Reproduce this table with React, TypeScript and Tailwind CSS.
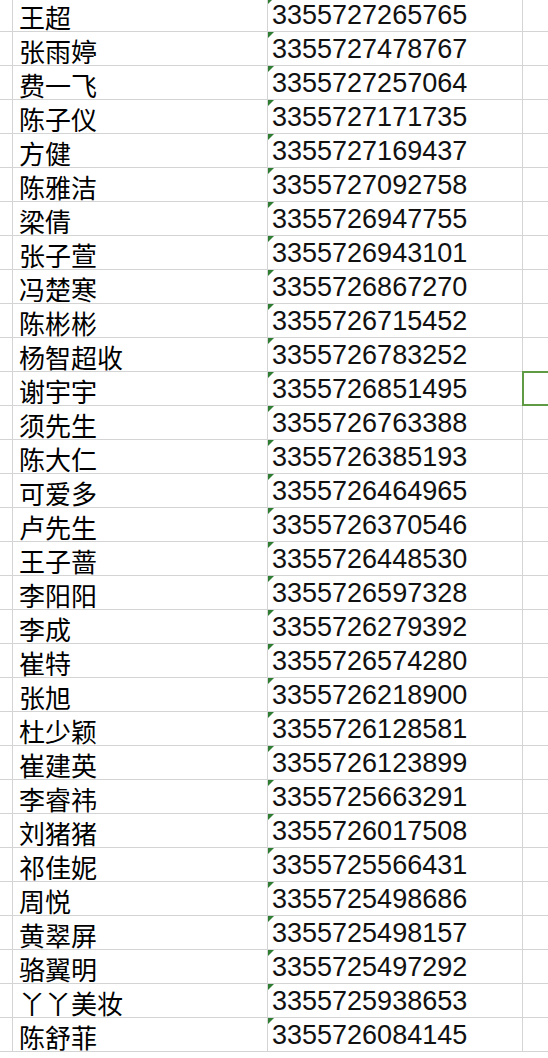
const ROWS: [string, string][] = [
  ["王超", "3355727265765"],
  ["张雨婷", "3355727478767"],
  ["费一飞", "3355727257064"],
  ["陈子仪", "3355727171735"],
  ["方健", "3355727169437"],
  ["陈雅洁", "3355727092758"],
  ["梁倩", "3355726947755"],
  ["张子萱", "3355726943101"],
  ["冯楚寒", "3355726867270"],
  ["陈彬彬", "3355726715452"],
  ["杨智超收", "3355726783252"],
  ["谢宇宇", "3355726851495"],
  ["须先生", "3355726763388"],
  ["陈大仁", "3355726385193"],
  ["可爱多", "3355726464965"],
  ["卢先生", "3355726370546"],
  ["王子蔷", "3355726448530"],
  ["李阳阳", "3355726597328"],
  ["李成", "3355726279392"],
  ["崔特", "3355726574280"],
  ["张旭", "3355726218900"],
  ["杜少颖", "3355726128581"],
  ["崔建英", "3355726123899"],
  ["李睿祎", "3355725663291"],
  ["刘猪猪", "3355726017508"],
  ["祁佳妮", "3355725566431"],
  ["周悦", "3355725498686"],
  ["黄翠屏", "3355725498157"],
  ["骆翼明", "3355725497292"],
  ["丫丫美妆", "3355725938653"],
  ["陈舒菲", "3355726084145"],
];

// selected cell sits in column D on this row
const SELECTED = 11;

export default function App() {
  return (
    <div className="w-[548px] h-[1058px] overflow-hidden bg-white">
      <div className="-mt-[2px]">
        {ROWS.map(([name, num], i) => (
          <div
            key={i}
            className="grid grid-cols-[13px_255px_255px_1fr] h-[34px] border-b border-[#d4d4d4]"
          >
            <div className="border-r border-[#d4d4d4]" />
            <div className="border-r border-[#d4d4d4] pl-[6px] flex items-center pt-[4px] text-[26px] leading-none text-black font-['Noto_Sans_CJK_SC',sans-serif] font-normal">
              {name}
            </div>
            <div className="relative border-r border-[#d4d4d4] pl-[4px] flex items-center pt-[1px] text-[27px] leading-none text-[#111] font-['Liberation_Sans',Arial,sans-serif]">
              <span className="absolute left-0 top-0 w-0 h-0 border-t-[6px] border-r-[6px] border-t-[#2e7d32] border-r-transparent" />
              {num}
            </div>
            <div className="relative">
              {i === SELECTED && (
                <span className="absolute -left-[1px] -top-[1px] w-[30px] h-[35px] border-2 border-[#5f9a45]" />
              )}
            </div>
          </div>
        ))}
      </div>
    </div>
  );
}
